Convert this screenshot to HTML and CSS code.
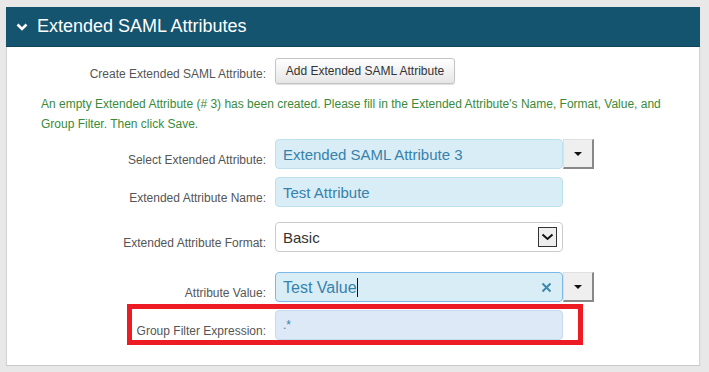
FILE: index.html
```html
<!DOCTYPE html>
<html lang="en">
<head>
  <meta charset="UTF-8">
  <meta name="viewport" content="width=device-width, initial-scale=1.0">
  <link rel="stylesheet" href="styles.css">
  <title>Extended SAML Attributes</title>
</head>
<body>
<div class="panel">
  <div class="panelHeader">
    <svg class="chevron" width="12" height="8" viewBox="0 0 12 8">
      <path d="M1.5 1.5 L6 6 L10.5 1.5" fill="none" stroke="#fff" stroke-width="2.6"/>
    </svg>
    <span>Extended SAML Attributes</span>
  </div>
  <div class="panelBody">
    <div class="formRow createRow">
      <label>Create Extended SAML Attribute:</label>
      <button class="addButton">Add Extended SAML Attribute</button>
    </div>
    <div class="message">
      An empty Extended Attribute (# 3) has been created. Please fill in the Extended Attribute's Name, Format, Value, and Group Filter. Then click Save.
    </div>

    <div class="formRow selectRow">
      <label>Select Extended Attribute:</label>
      <div class="field blue">Extended SAML Attribute 3</div>
      <div class="dropButton"><span class="caret"></span></div>
    </div>

    <div class="formRow nameRow">
      <label>Extended Attribute Name:</label>
      <div class="field blue">Test Attribute</div>
    </div>

    <div class="formRow formatRow">
      <label>Extended Attribute Format:</label>
      <div class="field plain">
        <span>Basic</span>
        <span class="selectArrow">
          <svg width="13" height="8" viewBox="0 0 13 8">
            <path d="M1.5 1.5 L6.5 6 L11.5 1.5" fill="none" stroke="#111" stroke-width="2"/>
          </svg>
        </span>
      </div>
    </div>

    <div class="formRow valueRow">
      <label>Attribute Value:</label>
      <div class="field blue focused">
        <span class="typed">Test Value<span class="cursor"></span></span>
        <svg class="clear" width="11" height="11" viewBox="0 0 11 11">
          <path d="M1.5 1.5 L9.5 9.5 M9.5 1.5 L1.5 9.5" stroke="#3d88ad" stroke-width="2"/>
        </svg>
      </div>
      <div class="dropButton"><span class="caret"></span></div>
    </div>

    <div class="formRow groupRow">
      <div class="highlight"></div>
      <label>Group Filter Expression:</label>
      <div class="field pale">.*</div>
    </div>
  </div>
</div>
</body>
</html>
```

FILE: styles.css
```css
body {
  margin: 0;
  padding: 7px 0 0 6px;
  background: #e8e8e8;
  font-family: "Liberation Sans", Arial, sans-serif;
}

.panel {
  width: 694px;
  background: #fff;
  border-bottom: 1px solid #c8c8c8;
  box-shadow: 0 1px 1px #d0d0d0;
}

.panelHeader {
  height: 40px;
  background: #14546f;
  color: #fff;
  font-size: 18px;
  display: flex;
  align-items: center;
  padding-left: 10px;
  gap: 9px;
  border-bottom: 1px solid #0f4359;
  box-sizing: border-box;
}

.chevron {
  margin-top: 1px;
}

.panelBody {
  border-left: 1px solid #d4d4d4;
  border-right: 1px solid #d4d4d4;
  padding-bottom: 25px;
}

.formRow {
  display: grid;
  grid-template-columns: 259px 288px 31px;
  column-gap: 9px;
  align-items: end;
  position: relative;
}

.formRow label {
  text-align: right;
  font-size: 12px;
  color: #555;
  padding-bottom: 2px;
}

.createRow {
  padding-top: 11px;
}

.createRow label {
  padding-bottom: 3px;
}

.addButton {
  width: 180px;
  height: 26px;
  font-family: inherit;
  font-size: 12px;
  color: #333;
  background: linear-gradient(#fff, #e6e6e6);
  border: 1px solid #c4c4c4;
  border-radius: 3px;
  box-shadow: 0 1px 1px #ddd;
  padding: 0;
}

.message {
  width: 640px;
  padding: 10px 0 0 34px;
  font-size: 12px;
  line-height: 20px;
  color: #3a8a3a;
  height: 45px;
}

.field {
  height: 30px;
  box-sizing: border-box;
  border-radius: 4px;
  padding-left: 7px;
  display: flex;
  align-items: center;
  font-size: 15px;
}

.blue {
  background: #d9edf7;
  border: 1px solid #bce0ec;
  color: #3682ab;
}

.plain {
  background: #fff;
  border: 1px solid #ccc;
  color: #333;
  justify-content: space-between;
  padding-right: 5px;
}

.focused {
  border-color: #7db7e6;
  justify-content: space-between;
  padding-right: 10px;
  font-size: 16px;
}

.pale {
  background: #dde9f6;
  border: 1px solid #c4dcee;
  color: #3682ab;
  font-size: 12px;
  align-items: flex-start;
  padding-top: 7px;
}

.cursor {
  display: inline-block;
  width: 1px;
  height: 19px;
  background: #111;
  vertical-align: -4px;
}

.dropButton {
  height: 30px;
  box-sizing: border-box;
  margin-left: -9px;
  width: 31px;
  background: #efefef;
  border-top: 1px solid #e0e0e0;
  border-left: 1px solid #e0e0e0;
  border-right: 2px solid #888;
  border-bottom: 2px solid #888;
  display: flex;
  align-items: center;
  justify-content: center;
}

.caret {
  width: 0;
  height: 0;
  border-left: 4px solid transparent;
  border-right: 4px solid transparent;
  border-top: 4px solid #111;
}

.selectArrow {
  width: 19px;
  height: 20px;
  box-sizing: border-box;
  border: 1px solid #333;
  background: #eee;
  display: flex;
  align-items: center;
  justify-content: center;
}

.nameRow {
  margin-top: 8px;
}

.formatRow {
  margin-top: 15px;
}

.valueRow {
  margin-top: 20px;
}

.groupRow {
  margin-top: 8px;
}

/* annotation box drawn over the row */
.highlight {
  position: absolute;
  left: 120px;
  top: -6px;
  width: 456px;
  height: 41px;
  box-sizing: border-box;
  border: 5px solid #ed1c24;
}
```
